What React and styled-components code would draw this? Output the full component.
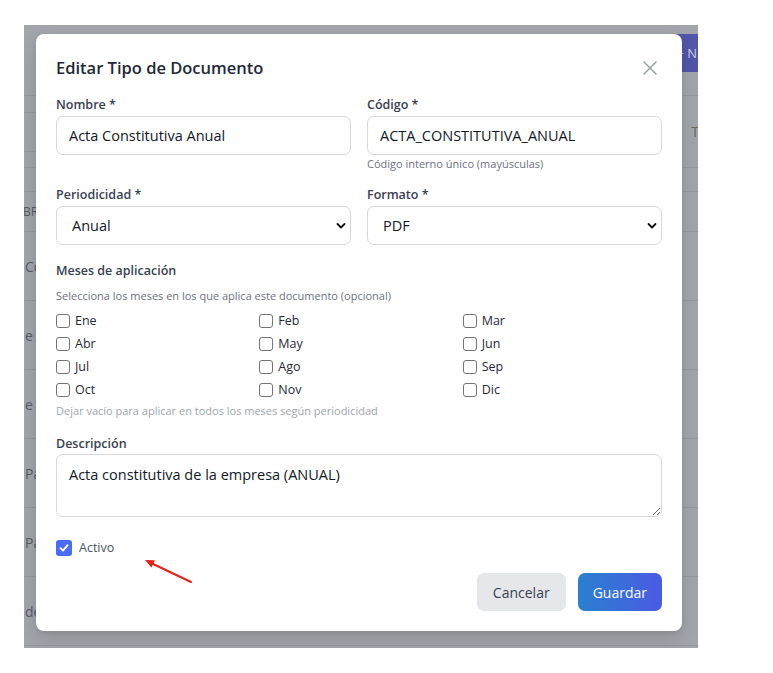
import React from "react";
import styled, { createGlobalStyle } from "styled-components";

const FONT = `"Open Sans", "Noto Sans", sans-serif`;

const Global = createGlobalStyle`
  html, body { margin: 0; padding: 0; background: #ffffff; }
  body { font-family: ${FONT}; }
  * { box-sizing: border-box; }
`;

const Page = styled.div`
  padding: 25px 0 0 24px;
`;

const Backdrop = styled.div`
  position: relative;
  width: 674px;
  height: 623px;
  overflow: hidden;
  background: #a2a5ab;
`;

const BgTable = styled.div`
  display: flex;
  flex-direction: column;
  width: 100%;
`;

const Band = styled.div`
  height: ${(p) => p.$h}px;
  flex: none;
  border-bottom: ${(p) => (p.$line ? "1px solid #95989e" : "none")};
  display: flex;
  align-items: ${(p) => p.$align || "center"};
  justify-content: space-between;
`;

const BgButton = styled.div`
  margin-top: 9px;
  width: 80px;
  height: 38px;
  border-radius: 7px 0 0 7px;
  background: #5157a9;
  color: #c9cbe4;
  font-size: 13px;
  display: flex;
  align-items: center;
  justify-content: flex-end;
  padding-right: 1px;
  white-space: nowrap;
`;

const BgSearch = styled.div`
  width: 12px;
  height: 40px;
  border-top: 1px solid #95989e;
  border-bottom: 1px solid #95989e;
`;

const BgText = styled.span`
  font-size: ${(p) => p.$size || 14}px;
  color: ${(p) => p.$color || "#575c66"};
  margin-left: ${(p) => p.$ml || 0}px;
  margin-right: ${(p) => p.$mr || 0}px;
  white-space: nowrap;
`;

const Modal = styled.div`
  position: absolute;
  left: 12px;
  top: 9px;
  width: 646px;
  background: #ffffff;
  border-radius: 8px;
  box-shadow: 0 8px 20px rgba(0, 0, 0, 0.12), 0 2px 5px rgba(0, 0, 0, 0.08);
  padding: 20px;
  display: flex;
  flex-direction: column;
`;

const Header = styled.div`
  height: 28px;
  display: flex;
  align-items: center;
  justify-content: space-between;
  margin-bottom: 14px;
`;

const Title = styled.h2`
  margin: 0;
  font-size: 16.5px;
  line-height: 28px;
  font-weight: 600;
  color: #1f2937;
`;

const CloseButton = styled.button`
  border: none;
  background: transparent;
  padding: 4px;
  width: 24px;
  height: 24px;
  display: flex;
  align-items: center;
  justify-content: center;
  cursor: pointer;
`;

const Row = styled.div`
  display: grid;
  grid-template-columns: 1fr 1fr;
  column-gap: 16px;
  margin-bottom: ${(p) => p.$mb || 0}px;
`;

const Field = styled.div`
  display: flex;
  flex-direction: column;
`;

const Label = styled.label`
  font-size: 12.5px;
  line-height: 18px;
  font-weight: 600;
  color: #374151;
  margin-top: ${(p) => p.$mt || 0}px;
  margin-bottom: ${(p) => (p.$mb === undefined ? 2 : p.$mb)}px;
`;

const Input = styled.input`
  height: 39px;
  width: 100%;
  border: 1px solid #d4d7dd;
  border-radius: 7px;
  padding: 0 12px;
  font-family: ${FONT};
  font-size: 14.5px;
  color: #111827;
  background: #fff;
  outline: none;
`;

const Help = styled.div`
  font-size: 11px;
  line-height: 14px;
  color: ${(p) => p.$color || "#6b7280"};
  margin-top: ${(p) => p.$mt || 0}px;
  margin-bottom: ${(p) => p.$mb || 0}px;
`;

const SelectWrap = styled.div`
  position: relative;
  height: 39px;
`;

const Select = styled.select`
  appearance: none;
  -webkit-appearance: none;
  width: 100%;
  height: 39px;
  border: 1px solid #d4d7dd;
  border-radius: 7px;
  padding: 0 30px 0 15px;
  font-family: ${FONT};
  font-size: 14.5px;
  color: #111827;
  background: #fff;
  outline: none;
`;

const Chevron = styled.svg`
  position: absolute;
  right: 5px;
  top: 16px;
  pointer-events: none;
`;

const MonthGrid = styled.div`
  display: grid;
  grid-template-columns: repeat(3, 1fr);
  column-gap: 4px;
  row-gap: 4px;
  margin-bottom: 5px;
`;

const CheckItem = styled.div`
  display: flex;
  align-items: center;
  gap: ${(p) => p.$gap || 5}px;
  font-size: 12.5px;
  line-height: ${(p) => p.$lh || 19}px;
  color: ${(p) => p.$color || "#1f2937"};
`;

const Box = styled.span`
  width: ${(p) => p.$size || 14}px;
  height: ${(p) => p.$size || 14}px;
  flex: none;
  border-radius: 3px;
  border: ${(p) => (p.$on ? "none" : "1px solid #747474")};
  background: ${(p) => (p.$on ? "#4a6cf6" : "#fff")};
  display: flex;
  align-items: center;
  justify-content: center;
`;

const TextArea = styled.textarea`
  height: 63px;
  width: 100%;
  border: 1px solid #d4d7dd;
  border-radius: 7px;
  padding: 10px 12px;
  font-family: ${FONT};
  font-size: 14.5px;
  line-height: 20px;
  color: #111827;
  resize: vertical;
  outline: none;
  display: block;
  margin-bottom: 21px;
`;

const Footer = styled.div`
  display: flex;
  justify-content: flex-end;
  gap: 12px;
  margin-top: 15px;
`;

const Button = styled.button`
  height: 38px;
  padding: 0 ${(p) => (p.$primary ? 15 : 16)}px;
  border: none;
  border-radius: 7px;
  font-family: ${FONT};
  font-size: 14px;
  font-weight: ${(p) => (p.$primary ? 500 : 400)};
  color: ${(p) => (p.$primary ? "#ffffff" : "#374151")};
  background: ${(p) =>
    p.$primary ? "linear-gradient(90deg, #2a80cf, #4b5ae4)" : "#e5e7eb"};
  cursor: pointer;
`;

const Annotation = styled.svg`
  position: absolute;
  left: 107px;
  top: 524px;
  pointer-events: none;
`;

const months = ["Ene", "Feb", "Mar", "Abr", "May", "Jun", "Jul", "Ago", "Sep", "Oct", "Nov", "Dic"];
const rowTexts = ["Co", "e c", "e c", "Pa", "Pa", "de"];

const ChevronIcon = () => (
  <Chevron width="10" height="8" viewBox="0 0 10 8">
    <path d="M1.5 2 L5 5.5 L8.5 2" fill="none" stroke="#111" strokeWidth="1.8" strokeLinecap="round" strokeLinejoin="round" />
  </Chevron>
);

export default function App() {
  return (
    <>
      <Global />
      <Page>
        <Backdrop>
          <BgTable>
            <Band $h={71} $line $align="flex-start">
              <span />
              <BgButton>+ N</BgButton>
            </Band>
            <Band $h={72} $line>
              <BgSearch />
              <BgText $mr={-1} $color="#6b6661">T</BgText>
            </Band>
            <Band $h={24} $line />
            <Band $h={40} $line>
              <BgText $size={12} $ml={-1}>BR</BgText>
            </Band>
            {rowTexts.map((t, i) => (
              <Band key={i} $h={69} $line>
                <BgText $ml={1}>{t}</BgText>
              </Band>
            ))}
          </BgTable>

          <Modal>
            <Header>
              <Title>Editar Tipo de Documento</Title>
              <CloseButton aria-label="Cerrar">
                <svg width="16" height="16" viewBox="0 0 16 16">
                  <path d="M2 2 L14 14 M14 2 L2 14" stroke="#9ca3af" strokeWidth="1.6" strokeLinecap="round" />
                </svg>
              </CloseButton>
            </Header>

            <Row $mb={15}>
              <Field>
                <Label>Nombre *</Label>
                <Input defaultValue="Acta Constitutiva Anual" />
              </Field>
              <Field>
                <Label>Código *</Label>
                <Input defaultValue="ACTA_CONSTITUTIVA_ANUAL" />
                <Help $mt={2}>Código interno único (mayúsculas)</Help>
              </Field>
            </Row>

            <Row $mb={16}>
              <Field>
                <Label>Periodicidad *</Label>
                <SelectWrap>
                  <Select defaultValue="Anual">
                    <option>Anual</option>
                    <option>Mensual</option>
                  </Select>
                  <ChevronIcon />
                </SelectWrap>
              </Field>
              <Field>
                <Label>Formato *</Label>
                <SelectWrap>
                  <Select defaultValue="PDF">
                    <option>PDF</option>
                    <option>XML</option>
                  </Select>
                  <ChevronIcon />
                </SelectWrap>
              </Field>
            </Row>

            <Label $mt={1} $mb={9}>Meses de aplicación</Label>
            <Help $mb={8}>Selecciona los meses en los que aplica este documento (opcional)</Help>
            <MonthGrid>
              {months.map((m) => (
                <CheckItem key={m}>
                  <Box />
                  {m}
                </CheckItem>
              ))}
            </MonthGrid>
            <Help $color="#9ca3af" $mb={16}>Dejar vacío para aplicar en todos los meses según periodicidad</Help>

            <Label $mt={1} $mb={1}>Descripción</Label>
            <TextArea defaultValue="Acta constitutiva de la empresa (ANUAL)" />

            <CheckItem $gap={7} $lh={20} $color="#4b5563">
              <Box $on $size={16}>
                <svg width="12" height="12" viewBox="0 0 12 12">
                  <path d="M2.5 6.2 L5 8.7 L9.6 3.2" fill="none" stroke="#fff" strokeWidth="1.9" strokeLinecap="round" strokeLinejoin="round" />
                </svg>
              </Box>
              Activo
            </CheckItem>

            <Footer>
              <Button>Cancelar</Button>
              <Button $primary>Guardar</Button>
            </Footer>

            <Annotation width="52" height="28" viewBox="0 0 52 28">
              <path d="M48 24 L9 5.5" stroke="#e8201b" strokeWidth="2" strokeLinecap="round" />
              <polygon points="2,2 11.8,2.3 8.4,9.5" fill="#e8201b" />
            </Annotation>
          </Modal>
        </Backdrop>
      </Page>
    </>
  );
}
